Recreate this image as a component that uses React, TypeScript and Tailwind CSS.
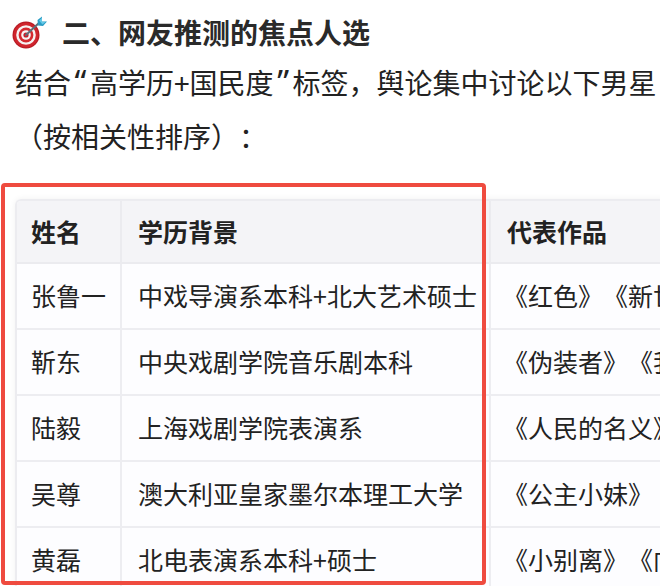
import React from "react";

const rows = [
  { name: "张鲁一", edu: "中戏导演系本科+北大艺术硕士", works: "《红色》《新世界》" },
  { name: "靳东", edu: "中央戏剧学院音乐剧本科", works: "《伪装者》《我的前半生》" },
  { name: "陆毅", edu: "上海戏剧学院表演系", works: "《人民的名义》" },
  { name: "吴尊", edu: "澳大利亚皇家墨尔本理工大学", works: "《公主小妹》" },
  { name: "黄磊", edu: "北电表演系本科+硕士", works: "《小别离》《向往的生活》" },
];

function Target() {
  return (
    <svg width="36" height="34" viewBox="0 0 36 34">
      <circle cx="14" cy="20" r="13.5" fill="#b81b24" />
      <circle cx="14" cy="20" r="12.3" fill="#d0252d" />
      <circle cx="14" cy="20" r="9.8" fill="#f6f2f2" />
      <circle cx="14" cy="20" r="7.4" fill="#d42a30" />
      <circle cx="14" cy="20" r="4.8" fill="#f7f4f4" />
      <circle cx="14" cy="20" r="2.6" fill="#c8202a" />
      <line x1="14" y1="20" x2="28" y2="7" stroke="#5f6e79" strokeWidth="2" strokeLinecap="round" />
      <path d="M25.5 5 L30 1.5 L29.5 6.5 L35 6.5 L31 11 L26 10.5 Z" fill="#2a9cc4" />
      <path d="M27 5.5 L30 3 L29.8 7 L33.5 7 L30.5 9.5 Z" fill="#62c9e8" />
    </svg>
  );
}

export default function App() {
  return (
    <div
      className="relative w-[660px] h-[586px] overflow-hidden bg-white text-[#222] [text-spacing-trim:space-all]"
      style={{ fontFamily: '"Noto Sans CJK SC", "Noto Sans", sans-serif' }}
    >
      <div className="pt-[12px]">
        <div className="flex items-center h-[40px] pl-[12px]">
          <Target />
          <span className="ml-[14px] text-[28px] font-bold leading-[40px] whitespace-nowrap text-[#2a2a2a]">
            二、网友推测的焦点人选
          </span>
        </div>
        <div className="mt-[4px] pl-[15px] text-[28px] leading-[52px] whitespace-nowrap">
          结合
          <span className="inline-block w-[19px] text-center text-[33px] leading-none" style={{ fontFamily: '"Noto Sans", sans-serif' }}>“</span>
          高学历+国民度
          <span className="inline-block w-[19px] text-center text-[33px] leading-none" style={{ fontFamily: '"Noto Sans", sans-serif' }}>”</span>
          标签，舆论集中讨论以下男星
        </div>
        <div className="mt-[2px] pl-[15px] text-[28px] leading-[52px] whitespace-nowrap">
          （按相关性排序）：
        </div>

        <div className="mt-[37px] ml-[15px] w-[900px] border-l-2 border-t-2 border-[#ececf0] rounded-tl-[6px] shadow-[0_0_6px_rgba(0,0,0,0.06)] overflow-hidden">
          <div className="flex h-[63px] bg-[#f4f4f7] text-[25px] font-bold">
            <div className="w-[105px] shrink-0 flex items-center pl-[14px] border-r-2 border-b-2 border-[#ebebef]">姓名</div>
            <div className="w-[369px] shrink-0 flex items-center pl-[16px] border-r-2 border-b-2 border-[#ebebef]">学历背景</div>
            <div className="flex-1 flex items-center pl-[16px] border-b-2 border-[#ebebef]">代表作品</div>
          </div>
          {rows.map((r) => (
            <div key={r.name} className="flex h-[66px] bg-[#fdfdff] text-[25px] whitespace-nowrap">
              <div className="w-[105px] shrink-0 flex items-center pl-[14px] border-r-2 border-b-2 border-[#ededf1]">{r.name}</div>
              <div className="w-[369px] shrink-0 flex items-center pl-[16px] border-r-2 border-b-2 border-[#ededf1]">{r.edu}</div>
              <div className="flex-1 flex items-center pl-[12px] border-b-2 border-[#ededf1]">{r.works}</div>
            </div>
          ))}
        </div>
      </div>

      <div className="absolute left-[1px] top-[183px] w-[485px] h-[402px] border-[4px] border-[#ef4b3f] rounded-[4px] pointer-events-none" />
    </div>
  );
}
